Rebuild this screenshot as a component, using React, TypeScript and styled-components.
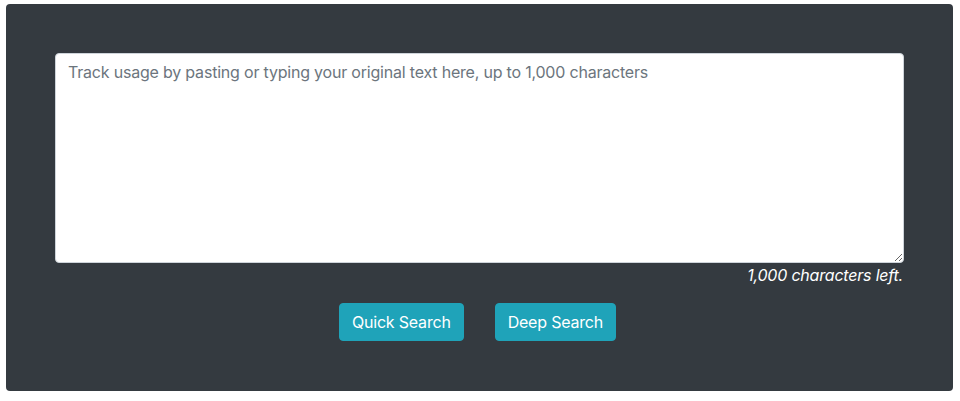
import { createGlobalStyle, styled } from 'styled-components';

const GlobalStyle = createGlobalStyle`
    html, body {
        margin: 0;
        padding: 0;
        background: #ffffff;
        font-family: Inter, 'Liberation Sans', Arial, sans-serif;
    }
`;

const Page = styled.div`
    padding: 4px 7px 0 6px;
`;

const Panel = styled.div`
    background: #343a40;
    border-radius: 4px;
    padding: 49px 49px 50px 49px;
    display: flex;
    flex-direction: column;
`;

const TextArea = styled.textarea`
    box-sizing: border-box;
    width: 100%;
    height: 210px;
    padding: 6px 12px;
    border: 1px solid #ced4da;
    border-radius: 4px;
    background: #ffffff;
    font-family: Inter, 'Liberation Sans', Arial, sans-serif;
    font-size: 16px;
    line-height: 24px;
    letter-spacing: -0.2px;
    color: #495057;
    resize: vertical;
    outline: none;
    display: block;

    &::placeholder {
        color: #6c757d;
        opacity: 1;
    }
`;

const Counter = styled.div`
    text-align: right;
    color: #ffffff;
    font-style: italic;
    font-size: 16px;
    line-height: 24px;
    letter-spacing: -0.2px;
    padding-right: 1px;
`;

const ButtonRow = styled.div`
    display: flex;
    justify-content: center;
    gap: 31px;
    margin-top: 16px;
    padding-right: 4px;
`;

const Button = styled.button`
    height: 38px;
    padding: 0 12px;
    border: 1px solid #1fa3b9;
    border-radius: 4px;
    background: #1fa3b9;
    color: #ffffff;
    font-family: Inter, 'Liberation Sans', Arial, sans-serif;
    font-size: 16px;
    line-height: 24px;
    letter-spacing: -0.2px;
    cursor: pointer;
`;

export default function App() {
    return (
        <>
            <GlobalStyle />
            <Page>
                <Panel>
                    <TextArea
                        maxLength={1000}
                        placeholder="Track usage by pasting or typing your original text here, up to 1,000 characters"
                    />
                    <Counter>1,000 characters left.</Counter>
                    <ButtonRow>
                        <Button>Quick Search</Button>
                        <Button>Deep Search</Button>
                    </ButtonRow>
                </Panel>
            </Page>
        </>
    );
}
